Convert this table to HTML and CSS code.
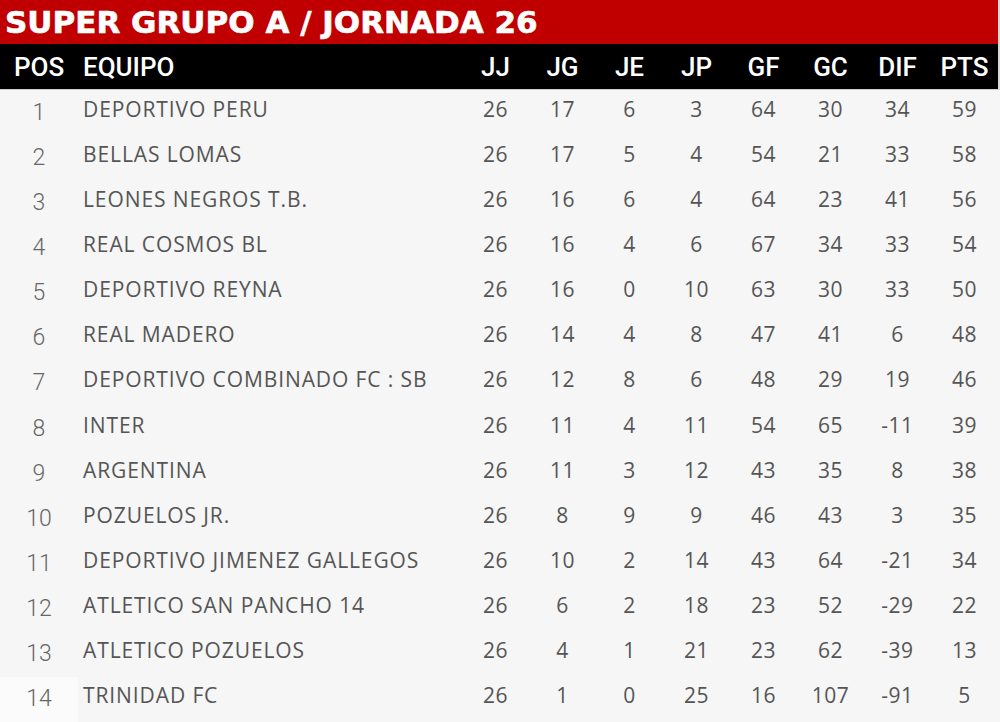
FILE: index.html
```html
<!DOCTYPE html>
<html lang="es">
<head>
<meta charset="utf-8">
<title>Super Grupo A / Jornada 26</title>
<link rel="stylesheet" href="styles.css">
</head>
<body>
<div class="board">
  <h1 class="title">SUPER GRUPO A / JORNADA 26</h1>
  <div class="row head">
    <div class="pos">POS</div><div class="team">EQUIPO</div>
    <div class="n">JJ</div><div class="n">JG</div><div class="n">JE</div><div class="n">JP</div>
    <div class="n">GF</div><div class="n">GC</div><div class="n">DIF</div><div class="n">PTS</div>
  </div>
  <div class="rows">
    <div class="row"><div class="pos">1</div><div class="team">DEPORTIVO PERU</div><div class="n">26</div><div class="n">17</div><div class="n">6</div><div class="n">3</div><div class="n">64</div><div class="n">30</div><div class="n">34</div><div class="n">59</div></div>
    <div class="row"><div class="pos">2</div><div class="team">BELLAS LOMAS</div><div class="n">26</div><div class="n">17</div><div class="n">5</div><div class="n">4</div><div class="n">54</div><div class="n">21</div><div class="n">33</div><div class="n">58</div></div>
    <div class="row"><div class="pos">3</div><div class="team">LEONES NEGROS T.B.</div><div class="n">26</div><div class="n">16</div><div class="n">6</div><div class="n">4</div><div class="n">64</div><div class="n">23</div><div class="n">41</div><div class="n">56</div></div>
    <div class="row"><div class="pos">4</div><div class="team">REAL COSMOS BL</div><div class="n">26</div><div class="n">16</div><div class="n">4</div><div class="n">6</div><div class="n">67</div><div class="n">34</div><div class="n">33</div><div class="n">54</div></div>
    <div class="row"><div class="pos">5</div><div class="team">DEPORTIVO REYNA</div><div class="n">26</div><div class="n">16</div><div class="n">0</div><div class="n">10</div><div class="n">63</div><div class="n">30</div><div class="n">33</div><div class="n">50</div></div>
    <div class="row"><div class="pos">6</div><div class="team">REAL MADERO</div><div class="n">26</div><div class="n">14</div><div class="n">4</div><div class="n">8</div><div class="n">47</div><div class="n">41</div><div class="n">6</div><div class="n">48</div></div>
    <div class="row"><div class="pos">7</div><div class="team">DEPORTIVO COMBINADO FC : SB</div><div class="n">26</div><div class="n">12</div><div class="n">8</div><div class="n">6</div><div class="n">48</div><div class="n">29</div><div class="n">19</div><div class="n">46</div></div>
    <div class="row"><div class="pos">8</div><div class="team">INTER</div><div class="n">26</div><div class="n">11</div><div class="n">4</div><div class="n">11</div><div class="n">54</div><div class="n">65</div><div class="n">-11</div><div class="n">39</div></div>
    <div class="row"><div class="pos">9</div><div class="team">ARGENTINA</div><div class="n">26</div><div class="n">11</div><div class="n">3</div><div class="n">12</div><div class="n">43</div><div class="n">35</div><div class="n">8</div><div class="n">38</div></div>
    <div class="row"><div class="pos">10</div><div class="team">POZUELOS JR.</div><div class="n">26</div><div class="n">8</div><div class="n">9</div><div class="n">9</div><div class="n">46</div><div class="n">43</div><div class="n">3</div><div class="n">35</div></div>
    <div class="row"><div class="pos">11</div><div class="team">DEPORTIVO JIMENEZ GALLEGOS</div><div class="n">26</div><div class="n">10</div><div class="n">2</div><div class="n">14</div><div class="n">43</div><div class="n">64</div><div class="n">-21</div><div class="n">34</div></div>
    <div class="row"><div class="pos">12</div><div class="team">ATLETICO SAN PANCHO 14</div><div class="n">26</div><div class="n">6</div><div class="n">2</div><div class="n">18</div><div class="n">23</div><div class="n">52</div><div class="n">-29</div><div class="n">22</div></div>
    <div class="row"><div class="pos">13</div><div class="team">ATLETICO POZUELOS</div><div class="n">26</div><div class="n">4</div><div class="n">1</div><div class="n">21</div><div class="n">23</div><div class="n">62</div><div class="n">-39</div><div class="n">13</div></div>
    <div class="row last"><div class="pos">14</div><div class="team">TRINIDAD FC</div><div class="n">26</div><div class="n">1</div><div class="n">0</div><div class="n">25</div><div class="n">16</div><div class="n">107</div><div class="n">-91</div><div class="n">5</div></div>
  </div>
</div>
</body>
</html>
```
FILE: styles.css
```css
html, body {
  margin: 0;
  padding: 0;
  background: #f6f6f6;
}
.board {
  width: 1000px;
  height: 722px;
  overflow: hidden;
  background: #f6f6f6;
}
.title {
  margin: 0;
  height: 44px;
  box-sizing: border-box;
  padding: 4px 0 0 5px;
  background: #c00000;
  border-right: 2px solid #d9d9d9;
  color: #fff;
  font-family: "DejaVu Sans", "Liberation Sans", sans-serif;
  font-weight: 700;
  font-size: 31px;
  line-height: 36px;
  -webkit-text-stroke: 0.6px #fff;
}
.row {
  display: grid;
  grid-template-columns: 78px 384px repeat(8, 67px);
  height: 45.15px;
  font-family: "Open Sans", "Noto Sans", sans-serif;
  font-size: 21px;
  color: #555;
}
.row > div {
  display: flex;
  align-items: center;
  box-sizing: border-box;
  padding-bottom: 8px;
  white-space: nowrap;
}
.team {
  padding-left: 5px;
  letter-spacing: 0.9px;
}
.n {
  justify-content: center;
  letter-spacing: 0.5px;
}
.pos {
  justify-content: center;
  font-family: Roboto, "Liberation Sans", sans-serif;
  font-weight: 300;
  font-size: 23px;
  color: #666;
}
.row > .pos {
  padding-bottom: 1px;
}
.row.last > .pos {
  background: #fbfbfb;
}
.row.head {
  height: 45px;
  background: #000;
  color: #fff;
  border-right: 2px solid #d9d9d9;
  border-bottom: 1px solid #cfcfcf;
  font-family: Roboto, "Liberation Sans", sans-serif;
  font-weight: 500;
  font-size: 26px;
}
.row.head > div {
  padding-bottom: 0;
  letter-spacing: 0;
}
.row.head > .pos {
  justify-content: flex-start;
  padding-left: 14px;
  font-weight: 500;
  font-size: 26px;
  color: #fff;
}
```
